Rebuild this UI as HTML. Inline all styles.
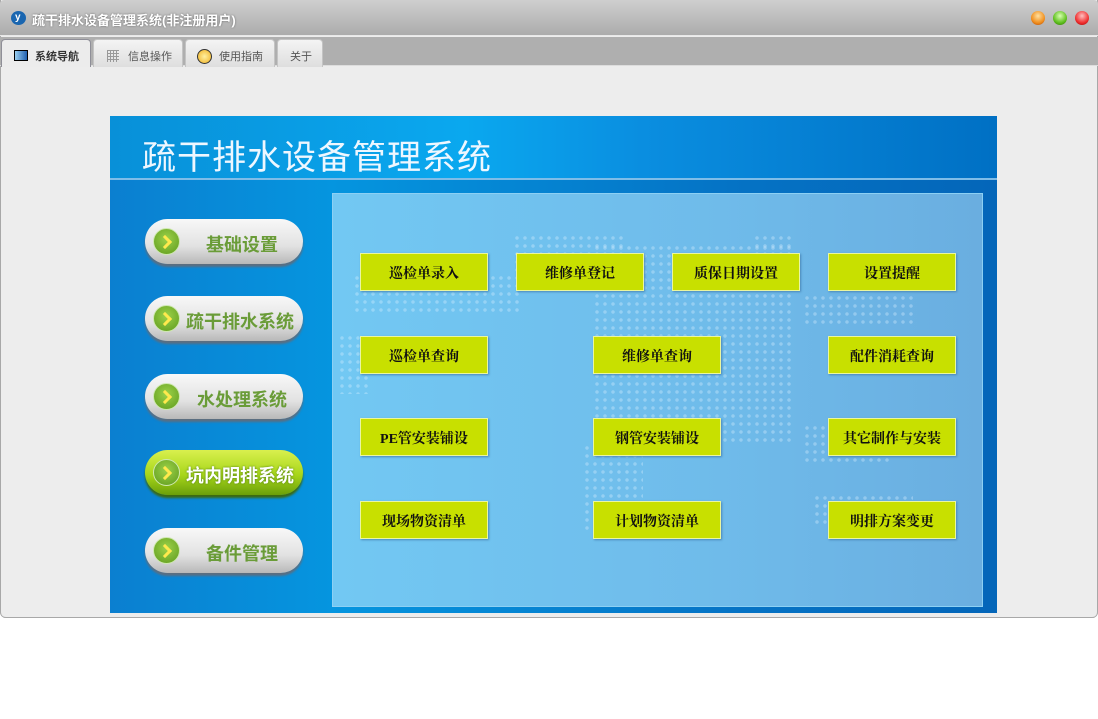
<!DOCTYPE html>
<html><head><meta charset="utf-8"><style>
*{margin:0;padding:0;box-sizing:border-box}
body{width:1098px;height:719px;background:#fff;position:relative;overflow:hidden;font-family:"Liberation Sans","Noto Sans CJK SC",sans-serif}
.win{position:absolute;left:0;top:0;width:1098px;height:618px;background:#ededed;box-shadow:inset 1px 0 #a8a8a8,inset -1px 0 #a8a8a8,inset 0 -1px #a8a8a8;border-radius:0 0 6px 6px}
.title{position:absolute;left:0;top:0;width:1098px;height:36px;background:linear-gradient(#cfcfcf,#acacac);border-bottom:1px solid #e8e8e8;border-radius:4px 4px 0 0}
.title span{position:absolute;left:32px;top:10px;color:#fff;font-size:13px;font-weight:bold;text-shadow:0 0 2px #666}
.logo{position:absolute;left:11px;top:11px;width:15px;height:14px;background:#1a66b0;border-radius:50%}
.logo b{position:absolute;left:4px;top:1px;color:#fff;font-size:10px}
.ball{position:absolute;top:11px;width:14px;height:14px;border-radius:50%}
.tabbar{position:absolute;left:0;top:37px;width:1098px;height:29px;background:#afafaf;border-bottom:1px solid #ddd}
.tab{position:absolute;top:2px;height:28px;background:linear-gradient(#f4f4f4,#dedede);border:1px solid #c4c4c4;border-bottom:none;border-radius:4px 4px 0 0;font-size:11px;color:#555;padding-top:8px}
.tab.act{background:#ececec;border-color:#8f8f98;color:#333;font-weight:bold}
.banner{position:absolute;left:110px;top:116px;width:887px;height:497px;background:linear-gradient(90deg,#0b7fd0,#0595df 25%,#0573c5 70%,#0466b9)}
.head{position:absolute;left:0;top:0;width:887px;height:64px;background:linear-gradient(90deg,#0890d8,#0aa8ef 40%,#0a8ee0 60%,#0070c4);border-bottom:2px solid #7fbde8}
.head span{position:absolute;left:32px;top:14px;color:#eef7ff;font-size:34px;letter-spacing:1px}
.panel{position:absolute;left:222px;top:77px;width:651px;height:414px;background:linear-gradient(90deg,#72c8f3,#6fbbea 60%,#6aaee0);border:1px solid #8cd0f4;overflow:hidden}
.dots{position:absolute;background:radial-gradient(circle,rgba(220,240,255,.35) 1.5px,transparent 2px);background-size:8px 8px}
.pill{position:absolute;left:35px;width:158px;height:45px;border-radius:23px;background:linear-gradient(#f8f8f8,#e2e2e2 60%,#b8b8b8);box-shadow:0 3px 2px #5c6e80}
.pill i{position:absolute;left:8px;top:9px;width:27px;height:27px;border-radius:50%;background:radial-gradient(circle at 50% 40%,#9cd24a,#5e9a1c);border:1px solid #cfe8b0}
.pill i:after{content:"";position:absolute;left:6px;top:8px;width:7px;height:7px;border-top:3px solid #ffe94d;border-right:3px solid #ffe94d;transform:rotate(45deg)}
.pill span{position:absolute;left:40px;right:4px;top:12px;text-align:center;color:#6a9c38;font-size:18px;font-weight:bold}
.pill.g{background:linear-gradient(#d9f04e,#a8d61a 55%,#6a9f0a);box-shadow:0 3px 2px #3c6a10}
.pill.g span{color:#fff;text-shadow:0 0 2px #4a7a10}
.btn{position:absolute;width:128px;height:38px;background:#c8e000;border:1px solid #eaf6a0;box-shadow:1px 1px 2px #4a87b8;display:flex;align-items:center;justify-content:center;padding-top:1px;font-family:"Liberation Serif","Noto Serif CJK SC",serif;font-weight:bold;font-size:14px;color:#111}
</style></head><body>
<div class="win">
<div class="title"><div class="logo"><b>y</b></div><span>疏干排水设备管理系统(非注册用户)</span>
<div class="ball" style="left:1031px;background:radial-gradient(circle at 50% 35%,#ffe0a0,#f09020 60%,#b04000)"></div>
<div class="ball" style="left:1053px;background:radial-gradient(circle at 50% 35%,#d8ffb0,#60c020 60%,#2a7000)"></div>
<div class="ball" style="left:1075px;background:radial-gradient(circle at 50% 35%,#ffc0c0,#f03030 60%,#a00000)"></div>
</div>
<div class="tabbar">
<div class="tab act" style="left:1px;width:90px;padding-left:12px"><span style="display:inline-block;width:14px;height:11px;border:1px solid #000;background:linear-gradient(90deg,#9cd0f0,#2060b0);vertical-align:-1px;margin-right:7px"></span>系统导航</div>
<div class="tab" style="left:93px;width:90px;padding-left:13px"><span style="display:inline-block;width:12px;height:12px;background:repeating-linear-gradient(90deg,#999 0 1px,transparent 1px 3px),repeating-linear-gradient(#999 0 1px,transparent 1px 3px);vertical-align:-2px;margin-right:9px"></span>信息操作</div>
<div class="tab" style="left:185px;width:90px;padding-left:11px"><span style="display:inline-block;width:15px;height:15px;border-radius:50%;border:1px solid #333;background:radial-gradient(#fff0a0,#f0b020);vertical-align:-4px;margin-right:7px"></span>使用指南</div>
<div class="tab" style="left:277px;width:46px;padding-left:12px">关于</div>
</div>
<div class="banner">
<div class="head"><span>疏干排水设备管理系统</span></div>
<div class="pill" style="top:103px"><i></i><span>基础设置</span></div>
<div class="pill" style="top:180px"><i></i><span style="left:36px">疏干排水系统</span></div>
<div class="pill" style="top:258px"><i></i><span>水处理系统</span></div>
<div class="pill g" style="top:334px"><i></i><span style="left:36px">坑内明排系统</span></div>
<div class="pill" style="top:412px"><i></i><span>备件管理</span></div>
<div class="panel">
<div class="dots" style="left:180px;top:40px;width:110px;height:40px"></div>
<div class="dots" style="left:20px;top:80px;width:170px;height:40px"></div>
<div class="dots" style="left:260px;top:50px;width:200px;height:200px"></div>
<div class="dots" style="left:470px;top:100px;width:110px;height:30px"></div>
<div class="dots" style="left:250px;top:250px;width:60px;height:90px"></div>
<div class="dots" style="left:470px;top:230px;width:90px;height:40px"></div>
<div class="dots" style="left:480px;top:300px;width:100px;height:30px"></div>
<div class="dots" style="left:420px;top:40px;width:40px;height:20px"></div>
<div class="dots" style="left:5px;top:140px;width:30px;height:60px"></div>
</div>
</div>
<div class="btn" style="left:360px;top:253px">巡检单录入</div>
<div class="btn" style="left:516px;top:253px">维修单登记</div>
<div class="btn" style="left:672px;top:253px">质保日期设置</div>
<div class="btn" style="left:828px;top:253px">设置提醒</div>
<div class="btn" style="left:360px;top:336px">巡检单查询</div>
<div class="btn" style="left:593px;top:336px">维修单查询</div>
<div class="btn" style="left:828px;top:336px">配件消耗查询</div>
<div class="btn" style="left:360px;top:418px">PE管安装铺设</div>
<div class="btn" style="left:593px;top:418px">钢管安装铺设</div>
<div class="btn" style="left:828px;top:418px">其它制作与安装</div>
<div class="btn" style="left:360px;top:501px">现场物资清单</div>
<div class="btn" style="left:593px;top:501px">计划物资清单</div>
<div class="btn" style="left:828px;top:501px">明排方案变更</div>
</div>
</body></html>
